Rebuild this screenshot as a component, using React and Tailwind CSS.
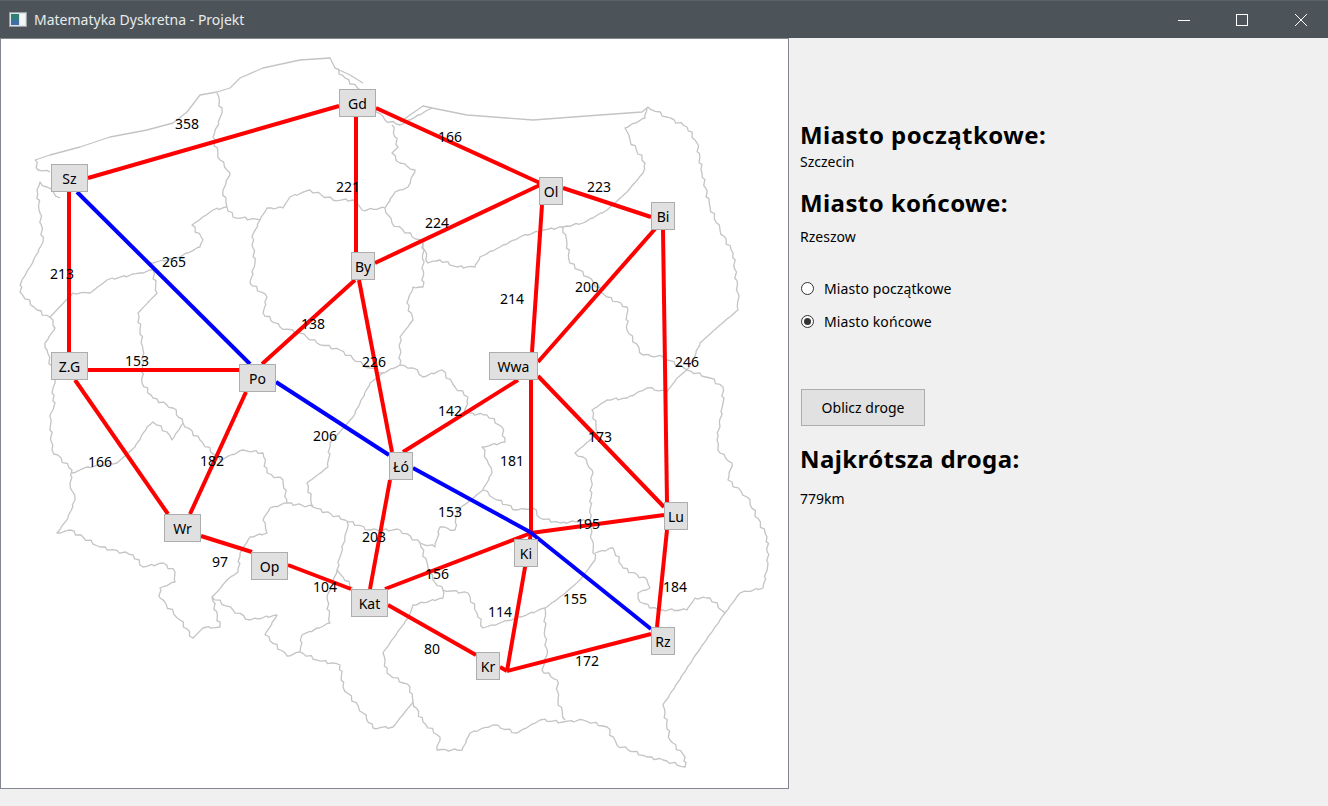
const nodes = [
  { name: "Gd", x: 339, y: 89, w: 37 },
  { name: "Sz", x: 51, y: 164, w: 37 },
  { name: "Ol", x: 539, y: 177, w: 24 },
  { name: "Bi", x: 651, y: 202, w: 24 },
  { name: "By", x: 351, y: 252, w: 24 },
  { name: "Z.G", x: 51, y: 352, w: 37 },
  { name: "Po", x: 239, y: 364, w: 37 },
  { name: "Wr", x: 164, y: 514, w: 37 },
  { name: "Łó", x: 389, y: 452, w: 24 },
  { name: "Wwa", x: 489, y: 352, w: 49 },
  { name: "Lu", x: 664, y: 502, w: 24 },
  { name: "Ki", x: 514, y: 539, w: 24 },
  { name: "Op", x: 251, y: 552, w: 37 },
  { name: "Kat", x: 351, y: 589, w: 37 },
  { name: "Kr", x: 476, y: 652, w: 24 },
  { name: "Rz", x: 651, y: 627, w: 24 },
];

const redLines = [
  [88, 178, 339, 106],
  [356, 110, 356, 252],
  [376, 108, 540, 183],
  [540, 185, 375, 263],
  [563, 188, 651, 217],
  [542, 205, 532, 352],
  [655, 229, 538, 362],
  [663, 230, 667, 502],
  [69, 192, 69, 352],
  [88, 370, 239, 370],
  [355, 280, 262, 364],
  [359, 280, 392, 452],
  [246, 392, 190, 514],
  [75, 380, 168, 514],
  [201, 536, 252, 552],
  [288, 565, 351, 589],
  [390, 480, 370, 589],
  [518, 380, 403, 452],
  [531, 380, 531, 534],
  [538, 376, 664, 507],
  [531, 533, 664, 515],
  [385, 589, 531, 533],
  [531, 533, 507, 671],
  [500, 667, 507, 671],
  [507, 671, 651, 634],
  [388, 605, 476, 655],
  [667, 530, 657, 627],
];

const blueLines = [
  [77, 192, 250, 364],
  [276, 382, 389, 455],
  [413, 468, 530, 532],
  [530, 532, 651, 629],
];

const labels = [
  ["358", 187, 124], ["166", 450, 137], ["223", 599, 187], ["221", 348, 187],
  ["224", 437, 223], ["265", 174, 262], ["213", 62, 274], ["214", 512, 299],
  ["200", 587, 287], ["138", 313, 324], ["226", 374, 362], ["246", 687, 362],
  ["153", 137, 361], ["142", 450, 411], ["173", 600, 437], ["206", 325, 436],
  ["181", 512, 461], ["182", 212, 461], ["166", 100, 462], ["153", 450, 512],
  ["195", 588, 524], ["203", 374, 537], ["97", 220, 562], ["156", 437, 574],
  ["104", 325, 587], ["184", 675, 587], ["155", 575, 599], ["114", 500, 612],
  ["80", 432, 649], ["172", 587, 661],
];

// coast is smooth, everything else gets a bit of wiggle
const coast = [
  [35, 160], [50, 155], [80, 147], [110, 137], [147, 130], [173, 123], [187, 112], [200, 95],
  [217, 92], [230, 88], [240, 78], [263, 68], [300, 60], [330, 58], [335, 68], [350, 75], [363, 83],
];
const coast2 = [
  [400, 122], [423, 106], [432, 108], [467, 115], [533, 120], [600, 115], [642, 112], [648, 107],
];

const borders = [
  // outer, east and south
  [[648, 107], [667, 117], [687, 127], [697, 143], [702, 173], [710, 207], [720, 230], [733, 253], [738, 293], [738, 310], [720, 325], [700, 343], [693, 360], [687, 370], [710, 378], [723, 387], [723, 403], [717, 440], [720, 453], [732, 463], [728, 480], [747, 497], [767, 537], [768, 563], [763, 588], [740, 593], [725, 613], [697, 653], [663, 705], [670, 740], [685, 757], [685, 767], [663, 760], [647, 757], [617, 745], [607, 727], [583, 720], [563, 722], [540, 720], [517, 733], [493, 725], [470, 733], [462, 750], [437, 750], [440, 737], [423, 722], [413, 702], [393, 727], [373, 728], [363, 713], [343, 687], [340, 665], [317, 660], [300, 652], [287, 656], [265, 635], [277, 615], [250, 620], [233, 610], [212, 597], [220, 627], [203, 628], [193, 638], [180, 620], [160, 598], [160, 588], [175, 582], [175, 572], [163, 563], [143, 567], [133, 555], [100, 547], [70, 530], [57, 533], [68, 518], [75, 500], [70, 483], [72, 470], [52, 450], [50, 417], [55, 403], [52, 393], [55, 383], [47, 350], [45, 343], [55, 328], [53, 320], [37, 310], [20, 292], [22, 280], [30, 267], [43, 242], [40, 213], [37, 190], [40, 182], [47, 187], [60, 198]],
  [[35, 160], [38, 170], [50, 172]],
  // gulf of Gdansk
  [[335, 68], [345, 78], [360, 90], [372, 105], [385, 120], [400, 125], [432, 108]],
  // pomorskie / zachodniopomorskie and down to wielkopolskie
  [[217, 93], [222, 113], [213, 137], [220, 160], [230, 173], [223, 190], [227, 207], [233, 217], [260, 220], [252, 237], [255, 263], [250, 283], [267, 297], [263, 313], [280, 327], [300, 333], [317, 343], [340, 350], [363, 365], [383, 373], [370, 383], [353, 417], [330, 443], [328, 467], [307, 483], [313, 507], [287, 503], [283, 480], [267, 473], [263, 453], [243, 450], [220, 460], [200, 440], [183, 423], [173, 408], [153, 398], [142, 383], [143, 350], [138, 313], [157, 293], [153, 270]],
  [[50, 317], [73, 293], [90, 293], [107, 280], [140, 273], [153, 270]],
  [[227, 207], [213, 210], [192, 225], [203, 240], [200, 247], [177, 258], [150, 263]],
  // kujawsko-pomorskie north edge, warminsko-mazurskie south edge
  [[260, 220], [267, 208], [283, 208], [290, 197], [310, 190], [333, 200], [353, 200], [362, 210], [385, 208], [392, 223], [423, 243], [428, 263], [440, 260], [457, 267], [475, 267], [480, 257], [500, 247], [520, 237], [543, 230], [563, 227], [583, 223], [607, 210], [627, 192], [643, 173], [645, 163], [630, 140], [625, 128], [645, 118], [647, 108]],
  [[392, 125], [398, 147], [392, 153], [400, 163], [415, 170], [408, 187], [395, 192], [385, 208]],
  // mazowieckie west edge, lodzkie east edge
  [[423, 243], [423, 287], [413, 287], [407, 303], [413, 320], [400, 337], [400, 365], [413, 368], [423, 377], [442, 370], [455, 387], [468, 397], [465, 413], [487, 415], [502, 427], [505, 442], [482, 447], [487, 460], [492, 473], [483, 490], [497, 500], [517, 510], [533, 508], [540, 518], [560, 523], [590, 520]],
  [[400, 365], [383, 373]],
  // lodzkie south
  [[483, 490], [467, 503], [457, 510], [455, 530], [440, 527], [435, 547], [420, 543], [400, 530], [370, 530], [345, 520], [313, 507]],
  [[347, 522], [347, 530], [340, 557], [337, 570], [343, 577], [353, 588]],
  [[337, 570], [330, 590], [327, 597], [330, 623], [302, 635], [300, 652]],
  // swietokrzyskie and malopolskie
  [[420, 543], [428, 567], [433, 580], [443, 590], [468, 593], [477, 613], [483, 628], [500, 623], [520, 617], [545, 608], [563, 595], [580, 580], [595, 560], [592, 540], [590, 520], [592, 470], [583, 457], [575, 453], [598, 433], [592, 410], [607, 400], [627, 398], [647, 388], [667, 392], [677, 378], [687, 370]],
  [[595, 553], [613, 548], [623, 568], [647, 580], [650, 588], [638, 593], [640, 602], [658, 610], [687, 610], [695, 598], [710, 598], [725, 613]],
  [[545, 608], [545, 637], [547, 655], [542, 670], [557, 680], [558, 700], [565, 720]],
  [[443, 590], [443, 598], [413, 605], [408, 618], [397, 633], [383, 653], [387, 673], [410, 687], [413, 702]],
  // opolskie
  [[212, 597], [217, 592], [227, 580], [238, 572], [240, 553], [250, 537], [267, 533], [263, 520], [270, 508], [287, 503]],
  // lubuskie / dolnoslaskie
  [[72, 473], [88, 467], [117, 463], [135, 447], [147, 427], [153, 422], [167, 432], [172, 440], [183, 423]],
  // podlaskie / mazowieckie
  [[563, 227], [567, 243], [570, 263], [588, 277], [607, 297], [627, 307], [627, 330], [643, 355], [663, 357], [687, 370]],
];

// breaks a straight segment into small steps so it reads like a hand drawn border
function wiggle(points) {
  const out = [];
  let seed = points[0][0] * 7 + points[0][1];
  for (let i = 0; i < points.length - 1; i++) {
    const [x1, y1] = points[i];
    const [x2, y2] = points[i + 1];
    const len = Math.hypot(x2 - x1, y2 - y1);
    const steps = Math.max(1, Math.round(len / 4));
    for (let s = 0; s < steps; s++) {
      const t = s / steps;
      const off = s === 0 ? 0 : Math.sin(seed++ * 2.3) * 1.2;
      out.push(`${(x1 + (x2 - x1) * t + off).toFixed(1)},${(y1 + (y2 - y1) * t - off).toFixed(1)}`);
    }
  }
  const last = points[points.length - 1];
  out.push(`${last[0]},${last[1]}`);
  return out.join(" ");
}

function smooth(points) {
  return points.map((p) => p.join(",")).join(" ");
}

function MapCanvas() {
  return (
    <div className="relative w-[789px] h-[751px] bg-white border border-[#828790] shrink-0">
      <svg className="absolute left-[-1px] top-[-39px]" width="789" height="789" viewBox="0 0 789 789">
        <g fill="none" stroke="#c4c4c4" strokeWidth="1.3" strokeLinejoin="round">
          <polyline points={smooth(coast)} />
          <polyline points={smooth(coast2)} />
          {borders.map((b, i) => (
            <polyline key={i} points={wiggle(b)} />
          ))}
        </g>
        {redLines.map((l, i) => (
          <line key={i} x1={l[0]} y1={l[1]} x2={l[2]} y2={l[3]} stroke="#ff0000" strokeWidth="4" />
        ))}
        {blueLines.map((l, i) => (
          <line key={i} x1={l[0]} y1={l[1]} x2={l[2]} y2={l[3]} stroke="#0000ff" strokeWidth="4" />
        ))}
      </svg>

      {labels.map(([text, x, y], i) => (
        <span
          key={i}
          className="absolute -translate-x-1/2 -translate-y-1/2 text-[14px] leading-5 text-black"
          style={{ left: x - 1, top: y - 39 }}
        >
          {text}
        </span>
      ))}

      {nodes.map((n) => (
        <div
          key={n.name}
          className="absolute h-[28px] flex items-center justify-center bg-[#e0e0e0] border border-[#adadad] text-[14px] text-black"
          style={{ left: n.x - 1, top: n.y - 39, width: n.w }}
        >
          {n.name}
        </div>
      ))}
    </div>
  );
}

function Radio({ label, checked, className }) {
  return (
    <div className={`flex items-center h-5 ${className}`}>
      <span className="w-[13px] h-[13px] rounded-full border border-[#333] bg-white flex items-center justify-center mr-[10px] ml-[1px]">
        {checked && <span className="w-[7px] h-[7px] rounded-full bg-[#333]" />}
      </span>
      <span className="text-[14px] tracking-[0.1px] text-black">{label}</span>
    </div>
  );
}

export default function App() {
  return (
    <div className="w-[1328px] h-[806px] overflow-hidden bg-[#f0f0f0] font-['Noto_Sans',sans-serif]">
      {/* title bar */}
      <div className="h-[38px] flex items-center bg-[#4c5459] border-t border-[#5a6166]">
        <svg className="ml-[9px]" width="18" height="15" viewBox="0 0 18 15">
          <rect x="0.5" y="0.5" width="17" height="14" fill="#dfe4e6" stroke="#9aa3a8" />
          <rect x="2" y="2" width="8" height="11" fill="#2f7f78" />
          <rect x="2" y="8" width="8" height="5" fill="#3f6fa5" />
          <rect x="11" y="2" width="5" height="11" fill="#f4f6f6" />
        </svg>
        <span className="ml-[7px] text-[14px] text-[#e8ebec]">Matematyka Dyskretna - Projekt</span>
        <div className="ml-auto flex items-center">
          <svg className="mr-[46px]" width="12" height="12" viewBox="0 0 12 12">
            <line x1="0" y1="6.5" x2="12" y2="6.5" stroke="#fff" />
          </svg>
          <svg className="mr-[47px]" width="12" height="12" viewBox="0 0 12 12">
            <rect x="0.5" y="0.5" width="11" height="11" fill="none" stroke="#fff" />
          </svg>
          <svg className="mr-[21px]" width="12" height="12" viewBox="0 0 12 12">
            <path d="M0 0 L12 12 M12 0 L0 12" stroke="#fff" fill="none" />
          </svg>
        </div>
      </div>

      <div className="flex">
        <MapCanvas />
        <div className="flex flex-col items-start pl-[11px] pt-[81px] text-black">
          <h2 className="text-[24px] leading-8 font-bold tracking-[0.45px]">Miasto początkowe:</h2>
          <p className="mt-px text-[14px] leading-5">Szczecin</p>
          <h2 className="mt-[15px] text-[24px] leading-8 font-bold tracking-[0.4px]">Miasto końcowe:</h2>
          <p className="mt-2 text-[14px] leading-5">Rzeszow</p>
          <Radio label="Miasto początkowe" className="mt-[31px]" />
          <Radio label="Miasto końcowe" checked className="mt-[13px]" />
          <button className="mt-[58px] ml-px w-[124px] h-[37px] bg-[#e1e1e1] border border-[#adadad] text-[14px] text-black">
            Oblicz droge
          </button>
          <h2 className="mt-[17px] text-[24px] leading-8 font-bold tracking-[0.4px]">Najkrótsza droga:</h2>
          <p className="mt-[14px] text-[14px] leading-5">779km</p>
        </div>
      </div>
    </div>
  );
}
